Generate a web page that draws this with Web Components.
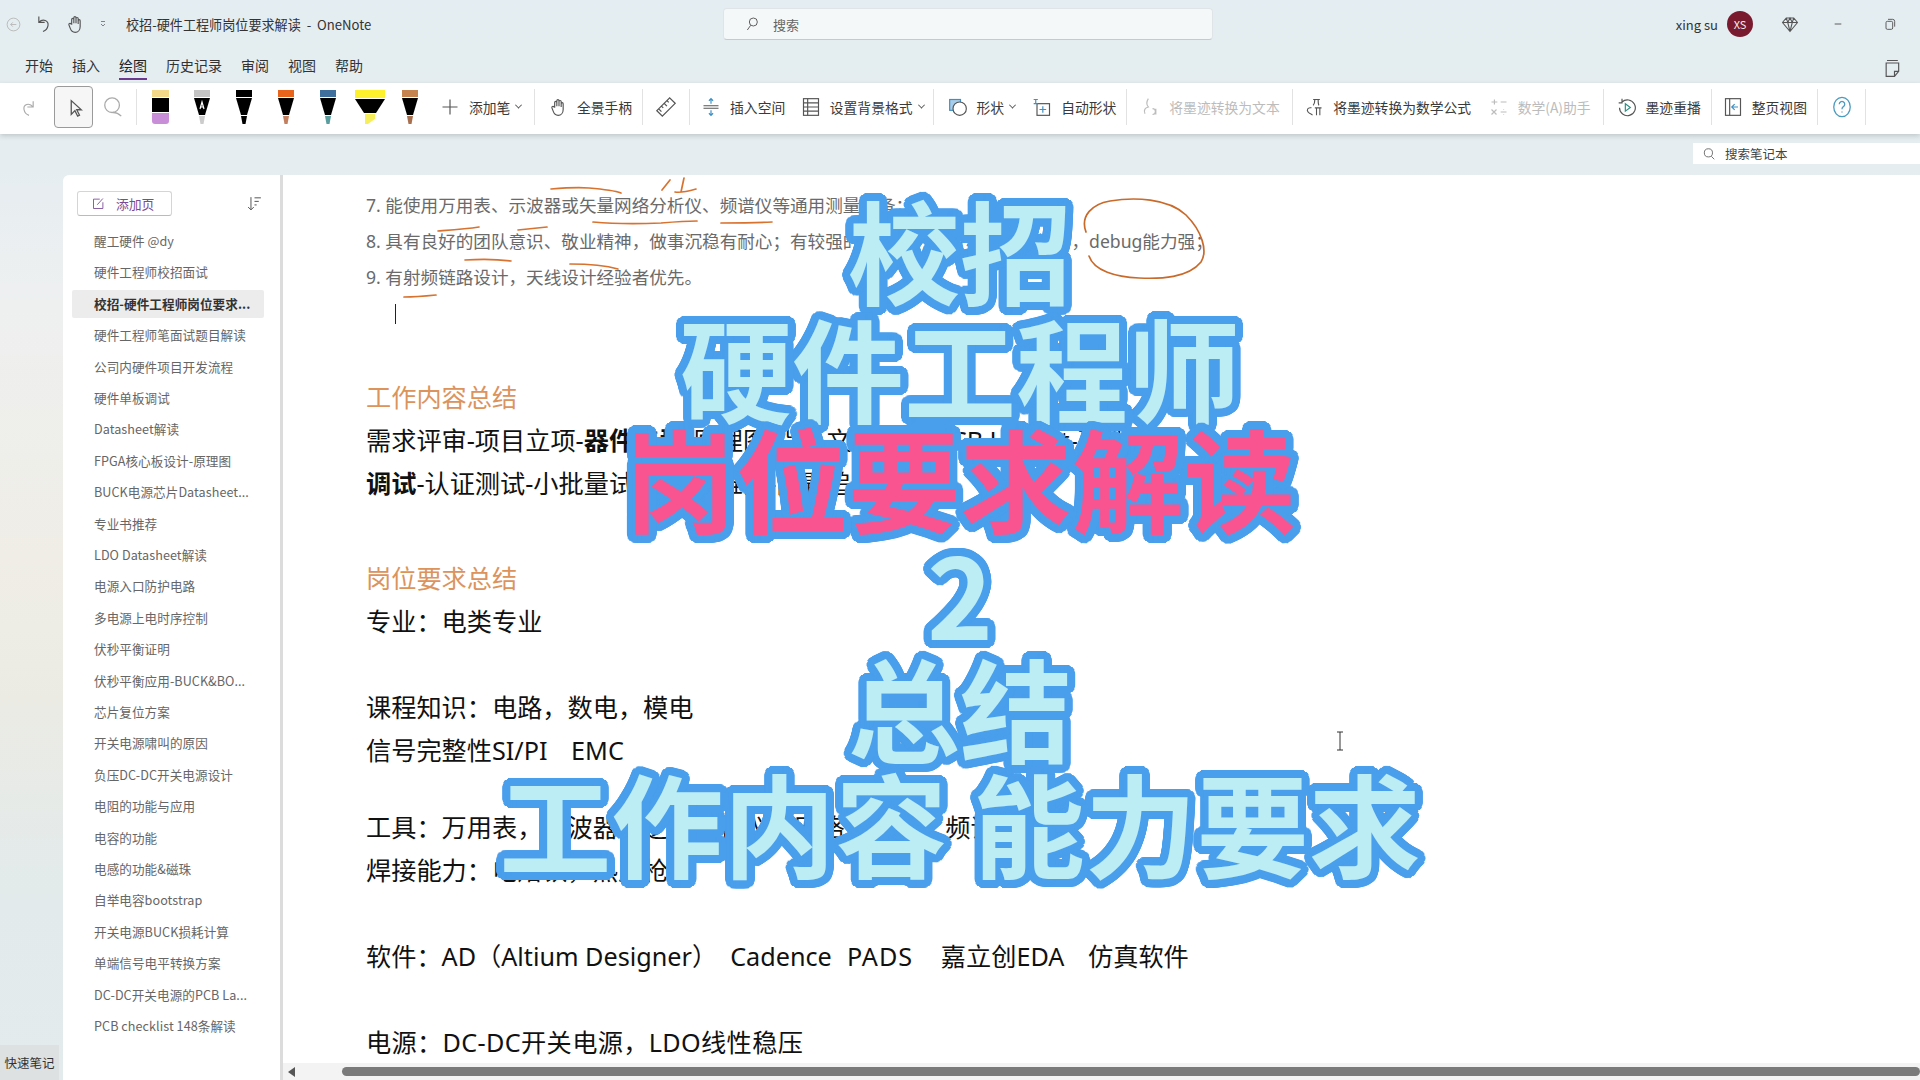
<!DOCTYPE html>
<html lang="zh">
<head>
<meta charset="utf-8">
<title>OneNote</title>
<style>
  html, body { margin: 0; height: 100%; overflow: hidden; }
  body { font-family: "Noto Sans CJK SC", sans-serif; }
</style>
</head>
<body>
<one-app>
  <title-bar slot="title"></title-bar>
  <tab-strip slot="tabs"></tab-strip>
  <ink-ribbon slot="ribbon">
    <ui-icon name="redo" size="20" style="margin-left:19px;color:#aaa"></ui-icon>
    <ui-icon name="select" size="39" boxed style="margin-left:15px"></ui-icon>
    <ui-icon name="lasso" size="22" style="margin-left:9px;color:#aaa"></ui-icon>
    <rb-sep style="margin-left:12px"></rb-sep>
    <ink-pen cap="#f3d88a" tip="#c88fd8" shape="block" style="margin-left:6px"></ink-pen>
    <ink-pen cap="#c4c4c4" tip="#ccc" letter="A" style="margin-left:8px"></ink-pen>
    <ink-pen cap="#000" tip="#000" style="margin-left:8px"></ink-pen>
    <ink-pen cap="#e8641c" tip="#c47f5f" style="margin-left:8px"></ink-pen>
    <ink-pen cap="#3f6f9c" tip="#5a9ea0" style="margin-left:8px"></ink-pen>
    <ink-pen cap="#fdf02c" tip="#f7ee5c" shape="marker" style="margin-left:8px"></ink-pen>
    <ink-pen cap="#c4834f" tip="#a8704f" style="margin-left:6px"></ink-pen>
    <rb-btn icon="plus" chevron style="margin-left:13px">添加笔</rb-btn>
    <rb-sep style="margin-left:13px"></rb-sep>
    <rb-btn icon="hand" style="margin-left:12.5px">全景手柄</rb-btn>
    <rb-sep style="margin-left:10px"></rb-sep>
    <ui-icon name="ruler" size="22" style="margin-left:12px"></ui-icon>
    <rb-sep style="margin-left:12px"></rb-sep>
    <rb-btn icon="space" style="margin-left:11px">插入空间</rb-btn>
    <rb-btn icon="lines" chevron style="margin-left:15.5px">设置背景格式</rb-btn>
    <rb-sep style="margin-left:9px"></rb-sep>
    <rb-btn icon="shape" chevron style="margin-left:14px">形状</rb-btn>
    <rb-btn icon="autoshape" style="margin-left:17px">自动形状</rb-btn>
    <rb-sep style="margin-left:10px"></rb-sep>
    <rb-btn icon="inktext" disabled style="margin-left:13px">将墨迹转换为文本</rb-btn>
    <rb-sep style="margin-left:12px"></rb-sep>
    <rb-btn icon="inkmath" style="margin-left:11.5px">将墨迹转换为数学公式</rb-btn>
    <rb-btn icon="mathops" disabled style="margin-left:17.5px">数学(A)助手</rb-btn>
    <rb-sep style="margin-left:12px"></rb-sep>
    <rb-btn icon="replay" style="margin-left:13px">墨迹重播</rb-btn>
    <rb-sep style="margin-left:10px"></rb-sep>
    <rb-btn icon="fullpage" style="margin-left:11px">整页视图</rb-btn>
    <rb-sep style="margin-left:10px"></rb-sep>
    <ui-icon name="help" size="22" style="margin-left:13px;color:#4a9bc0"></ui-icon>
    <rb-sep style="margin-left:12px"></rb-sep>
  </ink-ribbon>
  <search-row slot="search"></search-row>
  <page-list slot="pages">
    <page-item>醒工硬件 @dy</page-item>
    <page-item>硬件工程师校招面试</page-item>
    <page-item selected>校招-硬件工程师岗位要求...</page-item>
    <page-item>硬件工程师笔面试题目解读</page-item>
    <page-item>公司内硬件项目开发流程</page-item>
    <page-item>硬件单板调试</page-item>
    <page-item>Datasheet解读</page-item>
    <page-item>FPGA核心板设计-原理图</page-item>
    <page-item>BUCK电源芯片Datasheet...</page-item>
    <page-item>专业书推荐</page-item>
    <page-item>LDO Datasheet解读</page-item>
    <page-item>电源入口防护电路</page-item>
    <page-item>多电源上电时序控制</page-item>
    <page-item>伏秒平衡证明</page-item>
    <page-item>伏秒平衡应用-BUCK&amp;BO...</page-item>
    <page-item>芯片复位方案</page-item>
    <page-item>开关电源啸叫的原因</page-item>
    <page-item>负压DC-DC开关电源设计</page-item>
    <page-item>电阻的功能与应用</page-item>
    <page-item>电容的功能</page-item>
    <page-item>电感的功能&amp;磁珠</page-item>
    <page-item>自举电容bootstrap</page-item>
    <page-item>开关电源BUCK损耗计算</page-item>
    <page-item>单端信号电平转换方案</page-item>
    <page-item>DC-DC开关电源的PCB La...</page-item>
    <page-item>PCB checklist 148条解读</page-item>
  </page-list>
  <note-canvas slot="note"></note-canvas>
  <cover-title slot="cover"></cover-title>
</one-app>

<template id="noteTemplate">
  <style>
    :host { display: flex; flex-direction: column; flex: 1; min-width: 0; position: relative; background: #fff; }
    .page { flex: 1; overflow: hidden; padding: 12px 0 0 83px; color: #111; font-family: "Noto Sans", "Noto Sans CJK SC", sans-serif; font-size: 25.2px; line-height: 43px; white-space: nowrap; }
    .small { font-size: 17.6px; line-height: 36px; color: #6a6a6a; }
    .caret { width: 1px; height: 20px; background: #222; margin: 9px 0 0 29px; }
    h2 { margin: 0; font: inherit; color: #dc935c; }
    p { margin: 0; }
    b { font-weight: 700; }
    .scroll { height: 17px; flex: none; background: #f3f3f3; position: relative; display: flex; align-items: center; }
    .arrow { width: 0; height: 0; border: 5px solid transparent; border-right: 7px solid #555; border-left: 0; margin-left: 5px; }
    .thumb { height: 9px; border-radius: 5px; background: #7a7a7a; flex: 1; margin-left: 47px; }
    .cursor { position: absolute; left: 1052px; top: 556px; }
  </style>
  <div class="page">
    <div class="small">7. 能使用万用表、示波器或矢量网络分析仪、频谱仪等通用测量设备；</div>
    <div class="small">8. 具有良好的团队意识、敬业精神，做事沉稳有耐心；有较强的动手能力和分析问题的能力，debug能力强；</div>
    <div class="small">9. 有射频链路设计，天线设计经验者优先。</div>
    <div class="caret"></div>
    <h2 style="margin-top:50.5px;line-height:44px">工作内容总结</h2>
    <p>需求评审-项目立项-<b>器件选型</b>-原理图设计-文档评审-PCB Layout-硬件</p>
    <p><b>调试</b>-认证测试-小批量试产-量产维护-问题追溯</p>
    <h2 style="margin-top:52px">岗位要求总结</h2>
    <p>专业：电类专业</p>
    <p style="margin-top:43px">课程知识：电路，数电，模电</p>
    <p>信号完整性SI/PI&nbsp;&nbsp; <span style="margin-left:4px">EMC</span></p>
    <p style="margin-top:34px">工具：万用表，示波器，逻辑分析仪，网络分析仪，频谱仪</p>
    <p>焊接能力：电烙铁，热风枪</p>
    <p style="margin-top:43px">软件：AD（Altium Designer）&nbsp; Cadence&nbsp; <span style="margin-left:2px;letter-spacing:1px">PADS</span>&nbsp;&nbsp; <span style="margin-left:8px">嘉立创EDA</span>&nbsp;&nbsp; <span style="margin-left:4px">仿真软件</span></p>
    <p style="margin-top:43px;letter-spacing:.35px">电源：DC-DC开关电源，LDO线性稳压</p>
  </div>
  <div class="scroll"><span class="arrow"></span><span class="thumb"></span></div>
  <svg class="cursor" width="10" height="20" viewBox="0 0 10 20" fill="none" stroke="#333"><path d="M2 1h6M5 1v18M2 19h6"/></svg>
  <ink-layer></ink-layer>
</template>

<script>
  (function onenote(customElements, document) {
    'use strict';

    // iconos dibujados a mano, viewBox 24x24
    const ICONS = {
      back: '<circle cx="12" cy="12" r="9"/><path d="M16 12H8M11 9l-3 3 3 3"/>',
      undo: '<path d="M7 3v7h7M7 10c5-5 12-2 11 4-.6 3.5-3 6-6 7"/>',
      hand: '<path d="M8 13V6.5a1.3 1.3 0 0 1 2.6 0V11M10.6 11V4.5a1.3 1.3 0 0 1 2.6 0V11M13.2 11V5.5a1.3 1.3 0 0 1 2.6 0V12M15.8 12V8a1.2 1.2 0 0 1 2.4 0v7c0 4-2.5 7-6 7s-5-2-6-5l-1.5-4c-.5-1.5 1.5-2.5 2.7-.8"/>',
      caret: '<path d="M8 7h8M8 12l4 4 4-4"/>',
      search: '<circle cx="14" cy="9" r="6"/><path d="M10 14l-5 7"/>',
      search2: '<circle cx="11" cy="10" r="7"/><path d="M16 16l5 5"/>',
      diamond: '<path d="M7 4h10l5 6-10 12L2 10zM2 10h20M9 10l3 12 3-12M7 4l2 6 3-6 3 6 2-6"/>',
      min: '<path d="M7 12h10"/>',
      restore: '<rect x="6" y="8" width="10" height="12" rx="2"/><path d="M9 5h7a3 3 0 0 1 3 3v8"/>',
      sticky: '<path d="M6 3h13M5 6h15v10l-5 6H5zM20 16h-5v6"/>',
      redo: '<path d="M17 5v7h-7M17 12C12 6 5 9 6 15c.6 3.5 3 6 6 7"/>',
      select: '<path d="M9 5v15l4-4 3 6 2-1-3-6h5z"/>',
      lasso: '<ellipse cx="11" cy="10" rx="8" ry="8"/><path d="M12 18c2 0 6 1 9 4"/>',
      plus: '<path d="M12 3v18M3 12h18"/>',
      ruler: '<path d="M16 2l6 6L8 22l-6-6zM13 5l2 2M10 8l3 3M7 11l2 2M4 14l3 3"/>',
      space: '<path d="M3 10.5h18M3 13.5h18"/><path d="M12 8V2M9.5 4.5L12 2l2.5 2.5M12 16v6M9.5 19.5L12 22l2.5-2.5" stroke="#3d8fc4"/>',
      lines: '<rect x="3" y="2" width="18" height="20"/><path d="M3 7h18M3 12h18M3 17h18M8 2v20"/>',
      shape: '<rect x="2" y="3" width="13" height="13" fill="#a8cdea" stroke="#3d8fc4"/><circle cx="14" cy="14" r="8" fill="#fff"/>',
      autoshape: '<rect x="6" y="8" width="15" height="14"/><path d="M2 3h5M4.5 3v5M2 8h5" stroke="#3d8fc4"/><path d="M13 11v8M9 15h8" stroke="#3d8fc4"/>',
      inktext: '<path d="M10 2c-3 5-2 8 0 10-4 1-6 4-4 8M15 14a3.5 3.5 0 1 1 0 7M19 14v7"/>',
      inkmath: '<path d="M11 3h8M13 3c0 3-1 6-2 7M17 3c0 3 0 6 1 7"/><path d="M9 13c-5-1-6 3-4 5M5 18c2 3 5 2 5 4M13 13h8M15 13v9M19 13v9" stroke-width="1.3"/>',
      mathops: '<path d="M3 6h7M6.5 3v6M14 6h7M3 15l6 6M9 15l-6 6M14 18h7"/><path d="M17.5 15v.5M17.5 21v.5"/>',
      replay: '<path d="M6 6a9.5 9.5 0 1 1-3 7M6 2v5H2"/><path d="M10 8l6 4.5-6 4.5z" stroke="#2f8f83"/>',
      fullpage: '<rect x="3" y="2" width="18" height="20"/><path d="M8 2v20"/><path d="M18 12h-7M14 8.5L10.5 12l3.5 3.5" stroke="#3d8fc4"/>',
      help: '<ellipse cx="12" cy="12" rx="9" ry="10.5"/><path d="M9 9a3 3 0 1 1 4.5 2.6c-1 .6-1.5 1.2-1.5 2.9M12 17v1"/>',
      edit: '<path d="M14 5H4v15h15V10M10 14l9-10"/>',
      sort: '<path d="M7 3v18M3 17l4 4 4-4M12 4h9M12 9h6M12 14h3"/>'
    };

    class UiIcon extends HTMLElement {
      constructor() {
        super();
        const size = this.getAttribute('size') || 20;
        const boxed = this.hasAttribute('boxed');
        const d = ICONS[this.getAttribute('name')] || '';
        const inner = boxed ? 22 : size;
        this.attachShadow({mode: 'open'}).innerHTML = `
          <style>
            :host { display: inline-flex; align-items: center; justify-content: center; flex: none; color: #555; }
            svg { display: block; }
            .box { width: ${size}px; height: 42px; border: 1px solid #9a9a9a; border-radius: 4px; background: #f6f6f6; box-sizing: border-box; display: flex; align-items: center; justify-content: center; }
          </style>
          <div class="${boxed ? 'box' : ''}">
            <svg width="${inner}" height="${inner}" viewBox="0 0 24 24" fill="none" stroke="currentColor" stroke-width="1.4">${d}</svg>
          </div>`;
      }
    }

    class OneApp extends HTMLElement {
      constructor() {
        super();
        this.attachShadow({mode: 'open'}).innerHTML = `
          <style>
            :host { display: flex; flex-direction: column; width: 1920px; height: 1080px; position: relative; overflow: hidden;
              background: linear-gradient(180deg, #e4edf1 0, #e6edf0 170px, #eef0f0 300px, #efede6 560px, #ebebe4 700px, #e2eaeb 900px, #e3ebec 1080px); color: #333; }
            .main { flex: 1; display: flex; min-height: 0; }
            .rail { width: 63px; flex: none; display: flex; flex-direction: column; justify-content: flex-end; }
            .quick { width: 59px; height: 35px; background: #dde1e1; font-size: 12.5px; line-height: 35px; text-align: center; color: #333; }
            .sidebar { width: 217px; flex: none; background: #fff; border-radius: 6px 0 0 0; }
            .divider { width: 3px; flex: none; background: #dcdcdc; }
          </style>
          <slot name="title"></slot>
          <slot name="tabs"></slot>
          <slot name="ribbon"></slot>
          <slot name="search"></slot>
          <div class="main">
            <div class="rail"><div class="quick">快速笔记</div></div>
            <div class="sidebar"><slot name="pages"></slot></div>
            <div class="divider"></div>
            <slot name="note"></slot>
          </div>
          <slot name="cover"></slot>`;
      }
    }

    class TitleBar extends HTMLElement {
      constructor() {
        super();
        this.attachShadow({mode: 'open'}).innerHTML = `
          <style>
            :host { display: flex; align-items: center; height: 50px; box-sizing: border-box; padding-bottom: 2px; flex: none; font-size: 13px; color: #333; position: relative; }
            .title { margin-left: 17px; width: 287px; white-space: nowrap; font-size: 13.1px; }
            .search { width: 490px; height: 32px; box-sizing: border-box; background: #f5f8f9; border: 1px solid #dfe5e7; border-bottom-color: #c4cbce; border-radius: 4px; display: flex; align-items: center; padding-left: 20px; gap: 13px; margin-left: 310px; color: #666; }
            .right { margin-left: auto; display: flex; align-items: center; }
            .avatar { width: 26px; height: 26px; border-radius: 50%; background: #7a1a2e; color: #eee; font-size: 11px; line-height: 26px; text-align: center; margin-left: 9px; }
          </style>
          <ui-icon name="back" size="17" style="margin-left:5px;color:#bbb"></ui-icon>
          <ui-icon name="undo" size="20" style="margin-left:11px"></ui-icon>
          <ui-icon name="hand" size="20" style="margin-left:12px"></ui-icon>
          <ui-icon name="caret" size="12" style="margin-left:12px"></ui-icon>
          <span class="title">校招-硬件工程师岗位要求解读&nbsp; - &nbsp;OneNote</span>
          <div class="search"><ui-icon name="search" size="16"></ui-icon><span>搜索</span></div>
          <div class="right">
            <span>xing su</span><span class="avatar">XS</span>
            <ui-icon name="diamond" size="18" style="margin-left:28px"></ui-icon>
            <ui-icon name="min" size="16" style="margin-left:31px"></ui-icon>
            <ui-icon name="restore" size="16" style="margin-left:36px;margin-right:22px"></ui-icon>
          </div>`;
      }
    }

    class TabStrip extends HTMLElement {
      constructor() {
        super();
        const tabs = ['开始', '插入', '绘图', '历史记录', '审阅', '视图', '帮助'];
        this.attachShadow({mode: 'open'}).innerHTML = `
          <style>
            :host { display: flex; align-items: flex-start; height: 33px; flex: none; padding-left: 25px; gap: 19px; font-size: 14px; line-height: 31px; color: #333; position: relative; }
            span { position: relative; height: 33px; display: block; }
            .on { color: #222; }
            .on::after { content: ""; position: absolute; left: 0; right: 0; bottom: 3px; height: 2px; background: #6b3a8c; }
            ui-icon { position: absolute; left: 1882px; top: 8px; }
          </style>
          ${tabs.map(t => `<span class="${t === '绘图' ? 'on' : ''}">${t}</span>`).join('')}
          <ui-icon name="sticky" size="20"></ui-icon>`;
      }
    }

    class InkRibbon extends HTMLElement {
      constructor() {
        super();
        this.attachShadow({mode: 'open'}).innerHTML = `
          <style>
            :host { display: flex; align-items: center; height: 51px; box-sizing: border-box; padding-bottom: 4px; flex: none; background: #fff; box-shadow: 0 2px 5px rgba(0,0,0,.16); position: relative; z-index: 1; }
          </style>
          <slot></slot>`;
      }
    }

    class RbSep extends HTMLElement {
      constructor() {
        super();
        this.attachShadow({mode: 'open'}).innerHTML = `
          <style>:host { display: block; width: 1px; height: 36px; background: #e2e2e2; flex: none; }</style>`;
      }
    }

    class RbBtn extends HTMLElement {
      constructor() {
        super();
        const off = this.hasAttribute('disabled');
        const chev = this.hasAttribute('chevron');
        this.attachShadow({mode: 'open'}).innerHTML = `
          <style>
            :host { display: inline-flex; align-items: center; gap: 9px; font-size: 13.8px; color: ${off ? '#bcbcbc' : '#3a3a3a'}; white-space: nowrap; flex: none; }
            .chev { margin-left: -3px; width: 4px; height: 4px; border: solid #555; border-width: 0 1px 1px 0; transform: rotate(45deg) translate(-1px,-1px); }
            ui-icon { color: ${off ? '#bcbcbc' : '#555'}; }
          </style>
          <ui-icon name="${this.getAttribute('icon')}" size="20"></ui-icon>
          <span><slot></slot></span>
          ${chev ? '<span class="chev"></span>' : ''}`;
      }
    }

    class InkPen extends HTMLElement {
      constructor() {
        super();
        const cap = this.getAttribute('cap');
        const tip = this.getAttribute('tip');
        const shape = this.getAttribute('shape');
        const letter = this.getAttribute('letter');
        let body;
        if (shape === 'block') {
          body = `<rect x="9" y="1" width="17" height="7" fill="${cap}"/><rect x="9" y="9" width="17" height="14" fill="#000"/>
            <path d="M9 24h17v8a3 3 0 0 1-3 3h-11a3 3 0 0 1-3-3z" fill="${tip}"/>`;
        } else if (shape === 'marker') {
          body = `<rect x="2" y="1" width="30" height="8" fill="${cap}"/><path d="M2 10h30l-9 14h-12z" fill="#000"/>
            <path d="M12 25h10v5l-7 5h-3z" fill="${tip}"/>`;
        } else {
          body = `<rect x="9" y="1" width="16" height="7" fill="${cap}"/><path d="M9 9h16l-5 17h-6z" fill="#000"/>
            <path d="M14 27h6l-1.5 8h-3z" fill="${tip}"/>`;
          if (letter) body += `<path d="M15 20l2-7 2 7M15.8 18h2.4" fill="none" stroke="#fff" stroke-width="1.2"/>`;
        }
        this.attachShadow({mode: 'open'}).innerHTML = `
          <style>:host { display: block; flex: none; width: 34px; height: 36px; } svg { display: block; }</style>
          <svg width="34" height="36" viewBox="0 0 34 36">${body}</svg>`;
      }
    }

    class SearchRow extends HTMLElement {
      constructor() {
        super();
        this.attachShadow({mode: 'open'}).innerHTML = `
          <style>
            :host { display: flex; justify-content: flex-end; align-items: flex-start; height: 41px; flex: none; padding-top: 9px; box-sizing: border-box; }
            div { width: 227px; height: 21px; background: #fff; display: flex; align-items: center; gap: 9px; padding-left: 9px; box-sizing: border-box; font-size: 12.5px; color: #444; }
          </style>
          <div><ui-icon name="search2" size="14"></ui-icon><span>搜索笔记本</span></div>`;
      }
    }

    class PageList extends HTMLElement {
      constructor() {
        super();
        this.attachShadow({mode: 'open'}).innerHTML = `
          <style>
            :host { display: block; }
            .head { display: flex; align-items: center; justify-content: space-between; height: 50.4px; box-sizing: border-box; padding: 6px 17px 0 14px; }
            .add { width: 95px; height: 25px; box-sizing: border-box; border: 1px solid #d5d5d5; border-bottom-color: #bbb; border-radius: 3px; display: flex; align-items: center; gap: 10px; padding-left: 13px; font-size: 12.8px; color: #7b4a96; }
          </style>
          <div class="head">
            <div class="add"><ui-icon name="edit" size="15" style="color:#7b4a96"></ui-icon><span>添加页</span></div>
            <ui-icon name="sort" size="17"></ui-icon>
          </div>
          <slot></slot>`;
      }
    }

    class PageItem extends HTMLElement {
      constructor() {
        super();
        const sel = this.hasAttribute('selected');
        this.attachShadow({mode: 'open'}).innerHTML = `
          <style>
            :host { display: block; height: 31.42px; padding: 1.5px 16px 0 9px; box-sizing: border-box; }
            div { height: 28px; line-height: 28px; padding-left: 22px; font-size: 12.6px; letter-spacing: .06px; white-space: nowrap; color: ${sel ? '#333' : '#666'}; font-weight: ${sel ? 700 : 400}; background: ${sel ? '#ececec' : 'transparent'}; border-radius: 2px; }
          </style>
          <div><slot></slot></div>`;
      }
    }

    class NoteCanvas extends HTMLElement {
      constructor() {
        super();
        const templ = document.getElementById('noteTemplate');
        this.attachShadow({mode: 'open'}).appendChild(document.importNode(templ.content, true));
      }
    }

    // Trazos de tinta naranja sobre la pagina
    class InkLayer extends HTMLElement {
      constructor() {
        super();
        this.attachShadow({mode: 'open'}).innerHTML = `
          <style>
            :host { position: absolute; left: 0; top: 0; pointer-events: none; display: block; }
            svg { display: block; }
          </style>
          <svg width="1000" height="140" viewBox="283 175 1000 140" fill="none" stroke="#d8722f" stroke-width="1.7" stroke-linecap="round">
            <path d="M551 189c12-1 26-2 38-1 12 1 24 2 32 5"/>
            <path d="M670 180l-8 10M684 178l-3 14M675 192c6 1 14-1 21-3"/>
            <path d="M593 222c22 2 46 2 68 1 12-1 24-2 36-2"/>
            <path d="M721 223c17 0 34 0 51-1"/>
            <path d="M438 231c13-1 28-2 41-4"/>
            <path d="M518 230c9-1 20-2 29-3"/>
            <path d="M465 260c15-1 31-1 46 1"/>
            <path d="M570 264c17 0 34 1 48 5"/>
            <path d="M404 297c10 0 22-1 32-2"/>
            <path d="M1086 232c-6-16 6-28 24-31 24-4 58-3 76 14 16 16 22 36 15 47-13 16-40 17-62 16-23-1-45-7-50-22" stroke="#c96a2b"/>
          </svg>`;
      }
    }

    class CoverTitle extends HTMLElement {
      constructor() {
        super();
        const lines = [
          ['校招', 0, ''],
          ['硬件工程师', 2.5, ''],
          ['岗位要求解读', -4.5, 'pink'],
          ['2', 0, ''],
          ['总结', -0.5, ''],
          ['工作内容 能力要求', 0.5, '']
        ];
        // contorno redondo: anillos de text-shadow
        const ring = [];
        for (const r of [8, 5, 2.5]) {
          const n = r === 8 ? 40 : 20;
          for (let i = 0; i < n; i++) {
            const a = i / n * Math.PI * 2;
            ring.push(`${(Math.cos(a) * r).toFixed(2)}px ${(Math.sin(a) * r).toFixed(2)}px 0 #4a9fec`);
          }
        }
        this.attachShadow({mode: 'open'}).innerHTML = `
          <style>
            :host { position: absolute; left: 0; right: 0; top: 191px; display: flex; flex-direction: column; align-items: center; z-index: 5; pointer-events: none; }
            div { font-size: 112px; line-height: 115px; height: 115px; font-weight: 700; color: #bcedf5; white-space: nowrap;
              text-shadow: ${ring.join(',')}; font-family: "Noto Sans CJK SC", sans-serif; }
            .pink { color: #f9548f; }
          </style>
          ${lines.map(l => `<div class="${l[2]}" style="margin-top:${l[1]}px">${l[0]}</div>`).join('')}`;
      }
    }

    customElements.define('ui-icon', UiIcon);
    customElements.define('rb-sep', RbSep);
    customElements.define('rb-btn', RbBtn);
    customElements.define('ink-pen', InkPen);
    customElements.define('ink-ribbon', InkRibbon);
    customElements.define('title-bar', TitleBar);
    customElements.define('tab-strip', TabStrip);
    customElements.define('search-row', SearchRow);
    customElements.define('page-item', PageItem);
    customElements.define('page-list', PageList);
    customElements.define('ink-layer', InkLayer);
    customElements.define('note-canvas', NoteCanvas);
    customElements.define('cover-title', CoverTitle);
    customElements.define('one-app', OneApp);
  })(window.customElements, document)
</script>
</body>
</html>
